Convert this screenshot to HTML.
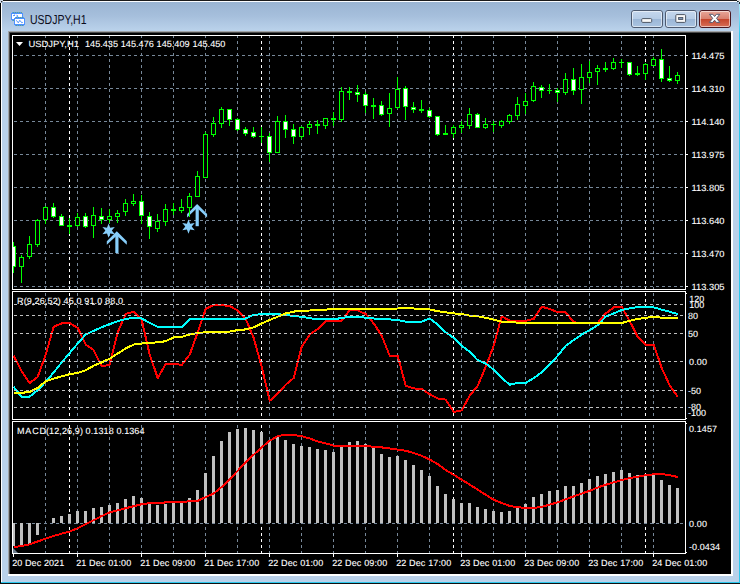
<!DOCTYPE html><html><head><meta charset="utf-8"><title>USDJPY,H1</title><style>html,body{margin:0;padding:0;background:#fff;overflow:hidden}svg{display:block}</style></head><body><svg width="742" height="584" viewBox="0 0 742 584" shape-rendering="crispEdges" font-family="'Liberation Sans', Arial, sans-serif"><defs><linearGradient id="tb" x1="0" y1="0" x2="0" y2="1"><stop offset="0" stop-color="#98b3d1"/><stop offset="0.5" stop-color="#a6bfdc"/><stop offset="1" stop-color="#bcd4ec"/></linearGradient><linearGradient id="bt" x1="0" y1="0" x2="0" y2="1"><stop offset="0" stop-color="#c6d8ee"/><stop offset="0.48" stop-color="#b6cce6"/><stop offset="0.5" stop-color="#9bb6d6"/><stop offset="1" stop-color="#abc5e2"/></linearGradient><linearGradient id="cl" x1="0" y1="0" x2="0" y2="1"><stop offset="0" stop-color="#e9a99c"/><stop offset="0.48" stop-color="#d9816f"/><stop offset="0.5" stop-color="#c4432a"/><stop offset="1" stop-color="#d8725a"/></linearGradient><linearGradient id="cy" x1="0" y1="0" x2="0" y2="1"><stop offset="0" stop-color="#b4eaf8"/><stop offset="1" stop-color="#2cc8ee"/></linearGradient></defs>
<rect x="0" y="0" width="742" height="584" fill="#ffffff"/>
<rect x="0" y="0" width="740" height="584" fill="#b9d1ea"/>
<rect x="0" y="0" width="740" height="32" fill="url(#tb)"/>
<rect x="0" y="0" width="740" height="1" fill="#1a1a1a"/>
<rect x="0" y="0" width="1" height="584" fill="#000000"/>
<rect x="1" y="1" width="738" height="1" fill="#fbfdff"/>
<rect x="1" y="1" width="1" height="581" fill="#ffffff"/>
<rect x="739" y="1" width="1" height="582" fill="#2cc8ee"/>
<rect x="1" y="582" width="739" height="1" fill="#2cc8ee"/>
<rect x="0" y="583" width="740" height="1" fill="#101010"/>
<rect x="0" y="0" width="3" height="1" fill="#cdd9e8"/>
<rect x="0" y="1" width="1" height="2" fill="#cdd9e8"/>
<rect x="1" y="1" width="1" height="1" fill="#2a2a2a"/>
<rect x="2" y="1" width="1" height="1" fill="#8f9aa8"/>
<rect x="1" y="2" width="1" height="1" fill="#8f9aa8"/>
<rect x="737" y="0" width="3" height="1" fill="#dcdcdc"/>
<rect x="737" y="1" width="1" height="1" fill="#1a3038"/>
<rect x="738" y="1" width="1" height="1" fill="#4a5a62"/>
<rect x="739" y="1" width="1" height="1" fill="#e6e6e6"/>
<rect x="739" y="2" width="1" height="2" fill="#1e2e36"/>
<rect x="738" y="2" width="1" height="1" fill="#cfe6f2"/>
<rect x="739" y="4" width="1" height="30" fill="url(#cy)"/>
<rect x="8" y="31" width="725" height="545" fill="#ffffff"/>
<rect x="8" y="31" width="723" height="543" fill="#a0a3a6"/>
<rect x="9" y="32" width="722" height="542" fill="#4a4a4a"/>
<rect x="10" y="33" width="721" height="541" fill="#000000"/>
<path d="M12.5 35.5H685.5V289.5H12.5Z" stroke="#ffffff" stroke-width="1" fill="none"/>
<path d="M12.5 291.5H685.5V419.5H12.5Z" stroke="#ffffff" stroke-width="1" fill="none"/>
<path d="M12.5 421.5H685.5V553.5H12.5Z" stroke="#ffffff" stroke-width="1" fill="none"/>
<clipPath id="cv"><rect x="13" y="36" width="672" height="253"/><rect x="13" y="292" width="672" height="127"/><rect x="13" y="422" width="672" height="131"/></clipPath><g clip-path="url(#cv)">
<path d="M45.5 35V553" stroke="#778899" stroke-width="1" stroke-dasharray="3 3" fill="none"/>
<path d="M77.5 35V553" stroke="#778899" stroke-width="1" stroke-dasharray="3 3" fill="none"/>
<path d="M109.5 35V553" stroke="#778899" stroke-width="1" stroke-dasharray="3 3" fill="none"/>
<path d="M141.5 35V553" stroke="#778899" stroke-width="1" stroke-dasharray="3 3" fill="none"/>
<path d="M173.5 35V553" stroke="#778899" stroke-width="1" stroke-dasharray="3 3" fill="none"/>
<path d="M205.5 35V553" stroke="#778899" stroke-width="1" stroke-dasharray="3 3" fill="none"/>
<path d="M237.5 35V553" stroke="#778899" stroke-width="1" stroke-dasharray="3 3" fill="none"/>
<path d="M269.5 35V553" stroke="#778899" stroke-width="1" stroke-dasharray="3 3" fill="none"/>
<path d="M301.5 35V553" stroke="#778899" stroke-width="1" stroke-dasharray="3 3" fill="none"/>
<path d="M333.5 35V553" stroke="#778899" stroke-width="1" stroke-dasharray="3 3" fill="none"/>
<path d="M365.5 35V553" stroke="#778899" stroke-width="1" stroke-dasharray="3 3" fill="none"/>
<path d="M397.5 35V553" stroke="#778899" stroke-width="1" stroke-dasharray="3 3" fill="none"/>
<path d="M429.5 35V553" stroke="#778899" stroke-width="1" stroke-dasharray="3 3" fill="none"/>
<path d="M461.5 35V553" stroke="#778899" stroke-width="1" stroke-dasharray="3 3" fill="none"/>
<path d="M493.5 35V553" stroke="#778899" stroke-width="1" stroke-dasharray="3 3" fill="none"/>
<path d="M525.5 35V553" stroke="#778899" stroke-width="1" stroke-dasharray="3 3" fill="none"/>
<path d="M557.5 35V553" stroke="#778899" stroke-width="1" stroke-dasharray="3 3" fill="none"/>
<path d="M589.5 35V553" stroke="#778899" stroke-width="1" stroke-dasharray="3 3" fill="none"/>
<path d="M621.5 35V553" stroke="#778899" stroke-width="1" stroke-dasharray="3 3" fill="none"/>
<path d="M653.5 35V553" stroke="#778899" stroke-width="1" stroke-dasharray="3 3" fill="none"/>
<path d="M69.5 35V553" stroke="#ffffff" stroke-width="1" stroke-dasharray="3 3" fill="none"/>
<path d="M261.5 35V553" stroke="#ffffff" stroke-width="1" stroke-dasharray="3 3" fill="none"/>
<path d="M453.5 35V553" stroke="#ffffff" stroke-width="1" stroke-dasharray="3 3" fill="none"/>
<path d="M645.5 35V553" stroke="#ffffff" stroke-width="1" stroke-dasharray="3 3" fill="none"/>
</g>
<path d="M14 55.5H685" stroke="#778899" stroke-width="1" stroke-dasharray="3 3" fill="none"/>
<rect x="686" y="55" width="2" height="1" fill="#ffffff"/>
<path d="M14 88.5H685" stroke="#778899" stroke-width="1" stroke-dasharray="3 3" fill="none"/>
<rect x="686" y="88" width="2" height="1" fill="#ffffff"/>
<path d="M14 121.5H685" stroke="#778899" stroke-width="1" stroke-dasharray="3 3" fill="none"/>
<rect x="686" y="121" width="2" height="1" fill="#ffffff"/>
<path d="M14 154.5H685" stroke="#778899" stroke-width="1" stroke-dasharray="3 3" fill="none"/>
<rect x="686" y="154" width="2" height="1" fill="#ffffff"/>
<path d="M14 187.5H685" stroke="#778899" stroke-width="1" stroke-dasharray="3 3" fill="none"/>
<rect x="686" y="187" width="2" height="1" fill="#ffffff"/>
<path d="M14 220.5H685" stroke="#778899" stroke-width="1" stroke-dasharray="3 3" fill="none"/>
<rect x="686" y="220" width="2" height="1" fill="#ffffff"/>
<path d="M14 253.5H685" stroke="#778899" stroke-width="1" stroke-dasharray="3 3" fill="none"/>
<rect x="686" y="253" width="2" height="1" fill="#ffffff"/>
<path d="M14 286.5H685" stroke="#778899" stroke-width="1" stroke-dasharray="3 3" fill="none"/>
<rect x="686" y="286" width="2" height="1" fill="#ffffff"/>
<rect x="686" y="293" width="1" height="1" fill="#ffffff"/>
<rect x="686" y="418" width="1" height="1" fill="#ffffff"/>
<rect x="686" y="423" width="1" height="1" fill="#ffffff"/>
<rect x="686" y="552" width="1" height="1" fill="#ffffff"/>
<path d="M14 523.5H685" stroke="#778899" stroke-width="1" stroke-dasharray="3 3" fill="none"/>
<polygon points="108.6,223.4 110.2,227.8 114.8,227.0 111.8,230.6 114.8,234.2 110.2,233.4 108.6,237.8 107.0,233.4 102.4,234.2 105.4,230.6 102.4,227.0 107.0,227.8" fill="#87cefa" shape-rendering="auto"/>
<g shape-rendering="auto" fill="#87cefa"><rect x="115.3" y="233.3" width="3.2" height="19.69999999999999"/><path d="M116.8 231.3L126.8 241.3V244.8L116.8 235.5L106.8 244.8V241.3Z"/></g>
<polygon points="188.5,219.4 190.1,223.8 194.7,223.0 191.7,226.6 194.7,230.2 190.1,229.4 188.5,233.8 186.9,229.4 182.3,230.2 185.3,226.6 182.3,223.0 186.9,223.8" fill="#87cefa" shape-rendering="auto"/>
<g shape-rendering="auto" fill="#87cefa"><rect x="195.6" y="205.9" width="3.2" height="20.299999999999983"/><path d="M197.1 203.9L207.1 213.9V217.4L197.1 208.1L187.1 217.4V213.9Z"/></g>
<clipPath id="c1"><rect x="13" y="36" width="672" height="253"/></clipPath><g clip-path="url(#c1)">
<rect x="13" y="242" width="1" height="31" fill="#00ff00"/>
<rect x="11" y="246" width="5" height="21" fill="#00ff00"/>
<rect x="12" y="247" width="3" height="19" fill="#ffffff"/>
<rect x="21" y="255" width="1" height="28" fill="#00ff00"/>
<rect x="19" y="257" width="5" height="10" fill="#00ff00"/>
<rect x="20" y="258" width="3" height="8" fill="#000000"/>
<rect x="29" y="236" width="1" height="23" fill="#00ff00"/>
<rect x="27" y="244" width="5" height="13" fill="#00ff00"/>
<rect x="28" y="245" width="3" height="11" fill="#000000"/>
<rect x="37" y="219" width="1" height="28" fill="#00ff00"/>
<rect x="35" y="220" width="5" height="25" fill="#00ff00"/>
<rect x="36" y="221" width="3" height="23" fill="#000000"/>
<rect x="45" y="206" width="1" height="18" fill="#00ff00"/>
<rect x="43" y="207" width="5" height="13" fill="#00ff00"/>
<rect x="44" y="208" width="3" height="11" fill="#000000"/>
<rect x="53" y="203" width="1" height="15" fill="#00ff00"/>
<rect x="51" y="207" width="5" height="10" fill="#00ff00"/>
<rect x="52" y="208" width="3" height="8" fill="#ffffff"/>
<rect x="61" y="214" width="1" height="12" fill="#00ff00"/>
<rect x="59" y="216" width="5" height="10" fill="#00ff00"/>
<rect x="60" y="217" width="3" height="8" fill="#ffffff"/>
<rect x="69" y="218" width="1" height="16" fill="#00ff00"/>
<rect x="67" y="225" width="5" height="2" fill="#00ff00"/>
<rect x="77" y="213" width="1" height="14" fill="#00ff00"/>
<rect x="75" y="217" width="5" height="9" fill="#00ff00"/>
<rect x="76" y="218" width="3" height="7" fill="#000000"/>
<rect x="85" y="213" width="1" height="15" fill="#00ff00"/>
<rect x="83" y="216" width="5" height="11" fill="#00ff00"/>
<rect x="84" y="217" width="3" height="9" fill="#ffffff"/>
<rect x="93" y="207" width="1" height="31" fill="#00ff00"/>
<rect x="91" y="215" width="5" height="11" fill="#00ff00"/>
<rect x="92" y="216" width="3" height="9" fill="#000000"/>
<rect x="101" y="208" width="1" height="16" fill="#00ff00"/>
<rect x="99" y="216" width="5" height="4" fill="#00ff00"/>
<rect x="100" y="217" width="3" height="2" fill="#ffffff"/>
<rect x="109" y="209" width="1" height="14" fill="#00ff00"/>
<rect x="107" y="216" width="5" height="4" fill="#00ff00"/>
<rect x="108" y="217" width="3" height="2" fill="#000000"/>
<rect x="117" y="210" width="1" height="13" fill="#00ff00"/>
<rect x="115" y="213" width="5" height="4" fill="#00ff00"/>
<rect x="116" y="214" width="3" height="2" fill="#000000"/>
<rect x="125" y="199" width="1" height="17" fill="#00ff00"/>
<rect x="123" y="203" width="5" height="9" fill="#00ff00"/>
<rect x="124" y="204" width="3" height="7" fill="#000000"/>
<rect x="133" y="194" width="1" height="12" fill="#00ff00"/>
<rect x="131" y="201" width="5" height="3" fill="#00ff00"/>
<rect x="132" y="202" width="3" height="1" fill="#000000"/>
<rect x="141" y="195" width="1" height="29" fill="#00ff00"/>
<rect x="139" y="201" width="5" height="15" fill="#00ff00"/>
<rect x="140" y="202" width="3" height="13" fill="#ffffff"/>
<rect x="149" y="212" width="1" height="27" fill="#00ff00"/>
<rect x="147" y="216" width="5" height="11" fill="#00ff00"/>
<rect x="148" y="217" width="3" height="9" fill="#ffffff"/>
<rect x="157" y="214" width="1" height="18" fill="#00ff00"/>
<rect x="155" y="221" width="5" height="8" fill="#00ff00"/>
<rect x="156" y="222" width="3" height="6" fill="#000000"/>
<rect x="165" y="204" width="1" height="22" fill="#00ff00"/>
<rect x="163" y="209" width="5" height="13" fill="#00ff00"/>
<rect x="164" y="210" width="3" height="11" fill="#000000"/>
<rect x="173" y="203" width="1" height="12" fill="#00ff00"/>
<rect x="171" y="209" width="5" height="2" fill="#00ff00"/>
<rect x="181" y="199" width="1" height="14" fill="#00ff00"/>
<rect x="179" y="207" width="5" height="4" fill="#00ff00"/>
<rect x="180" y="208" width="3" height="2" fill="#000000"/>
<rect x="189" y="193" width="1" height="24" fill="#00ff00"/>
<rect x="187" y="196" width="5" height="12" fill="#00ff00"/>
<rect x="188" y="197" width="3" height="10" fill="#000000"/>
<rect x="197" y="171" width="1" height="26" fill="#00ff00"/>
<rect x="195" y="176" width="5" height="21" fill="#00ff00"/>
<rect x="196" y="177" width="3" height="19" fill="#000000"/>
<rect x="205" y="132" width="1" height="46" fill="#00ff00"/>
<rect x="203" y="134" width="5" height="44" fill="#00ff00"/>
<rect x="204" y="135" width="3" height="42" fill="#000000"/>
<rect x="213" y="117" width="1" height="20" fill="#00ff00"/>
<rect x="211" y="123" width="5" height="12" fill="#00ff00"/>
<rect x="212" y="124" width="3" height="10" fill="#000000"/>
<rect x="221" y="107" width="1" height="21" fill="#00ff00"/>
<rect x="219" y="109" width="5" height="15" fill="#00ff00"/>
<rect x="220" y="110" width="3" height="13" fill="#000000"/>
<rect x="229" y="109" width="1" height="17" fill="#00ff00"/>
<rect x="227" y="109" width="5" height="11" fill="#00ff00"/>
<rect x="228" y="110" width="3" height="9" fill="#ffffff"/>
<rect x="237" y="118" width="1" height="13" fill="#00ff00"/>
<rect x="235" y="119" width="5" height="11" fill="#00ff00"/>
<rect x="236" y="120" width="3" height="9" fill="#ffffff"/>
<rect x="245" y="127" width="1" height="9" fill="#00ff00"/>
<rect x="243" y="129" width="5" height="5" fill="#00ff00"/>
<rect x="244" y="130" width="3" height="3" fill="#ffffff"/>
<rect x="253" y="127" width="1" height="11" fill="#00ff00"/>
<rect x="251" y="132" width="5" height="5" fill="#00ff00"/>
<rect x="252" y="133" width="3" height="3" fill="#ffffff"/>
<rect x="261" y="127" width="1" height="16" fill="#00ff00"/>
<rect x="259" y="136" width="5" height="1" fill="#00ff00"/>
<rect x="269" y="133" width="1" height="29" fill="#00ff00"/>
<rect x="267" y="136" width="5" height="17" fill="#00ff00"/>
<rect x="268" y="137" width="3" height="15" fill="#ffffff"/>
<rect x="277" y="116" width="1" height="37" fill="#00ff00"/>
<rect x="275" y="121" width="5" height="32" fill="#00ff00"/>
<rect x="276" y="122" width="3" height="30" fill="#000000"/>
<rect x="285" y="115" width="1" height="23" fill="#00ff00"/>
<rect x="283" y="121" width="5" height="9" fill="#00ff00"/>
<rect x="284" y="122" width="3" height="7" fill="#ffffff"/>
<rect x="293" y="124" width="1" height="20" fill="#00ff00"/>
<rect x="291" y="129" width="5" height="8" fill="#00ff00"/>
<rect x="292" y="130" width="3" height="6" fill="#ffffff"/>
<rect x="301" y="126" width="1" height="13" fill="#00ff00"/>
<rect x="299" y="127" width="5" height="10" fill="#00ff00"/>
<rect x="300" y="128" width="3" height="8" fill="#000000"/>
<rect x="309" y="121" width="1" height="14" fill="#00ff00"/>
<rect x="307" y="124" width="5" height="4" fill="#00ff00"/>
<rect x="308" y="125" width="3" height="2" fill="#000000"/>
<rect x="317" y="120" width="1" height="14" fill="#00ff00"/>
<rect x="315" y="124" width="5" height="2" fill="#00ff00"/>
<rect x="325" y="118" width="1" height="11" fill="#00ff00"/>
<rect x="323" y="118" width="5" height="8" fill="#00ff00"/>
<rect x="324" y="119" width="3" height="6" fill="#000000"/>
<rect x="333" y="112" width="1" height="14" fill="#00ff00"/>
<rect x="331" y="118" width="5" height="2" fill="#00ff00"/>
<rect x="341" y="87" width="1" height="35" fill="#00ff00"/>
<rect x="339" y="91" width="5" height="29" fill="#00ff00"/>
<rect x="340" y="92" width="3" height="27" fill="#000000"/>
<rect x="349" y="87" width="1" height="13" fill="#00ff00"/>
<rect x="347" y="91" width="5" height="2" fill="#00ff00"/>
<rect x="357" y="85" width="1" height="17" fill="#00ff00"/>
<rect x="355" y="92" width="5" height="3" fill="#00ff00"/>
<rect x="356" y="93" width="3" height="1" fill="#ffffff"/>
<rect x="365" y="92" width="1" height="21" fill="#00ff00"/>
<rect x="363" y="94" width="5" height="12" fill="#00ff00"/>
<rect x="364" y="95" width="3" height="10" fill="#ffffff"/>
<rect x="373" y="98" width="1" height="21" fill="#00ff00"/>
<rect x="371" y="105" width="5" height="2" fill="#00ff00"/>
<rect x="381" y="101" width="1" height="15" fill="#00ff00"/>
<rect x="379" y="105" width="5" height="10" fill="#00ff00"/>
<rect x="380" y="106" width="3" height="8" fill="#ffffff"/>
<rect x="389" y="93" width="1" height="34" fill="#00ff00"/>
<rect x="387" y="108" width="5" height="6" fill="#00ff00"/>
<rect x="388" y="109" width="3" height="4" fill="#000000"/>
<rect x="397" y="77" width="1" height="32" fill="#00ff00"/>
<rect x="395" y="89" width="5" height="19" fill="#00ff00"/>
<rect x="396" y="90" width="3" height="17" fill="#000000"/>
<rect x="405" y="86" width="1" height="34" fill="#00ff00"/>
<rect x="403" y="88" width="5" height="19" fill="#00ff00"/>
<rect x="404" y="89" width="3" height="17" fill="#ffffff"/>
<rect x="413" y="102" width="1" height="11" fill="#00ff00"/>
<rect x="411" y="107" width="5" height="3" fill="#00ff00"/>
<rect x="412" y="108" width="3" height="1" fill="#ffffff"/>
<rect x="421" y="100" width="1" height="13" fill="#00ff00"/>
<rect x="419" y="109" width="5" height="2" fill="#00ff00"/>
<rect x="429" y="108" width="1" height="10" fill="#00ff00"/>
<rect x="427" y="110" width="5" height="7" fill="#00ff00"/>
<rect x="428" y="111" width="3" height="5" fill="#ffffff"/>
<rect x="437" y="116" width="1" height="20" fill="#00ff00"/>
<rect x="435" y="116" width="5" height="19" fill="#00ff00"/>
<rect x="436" y="117" width="3" height="17" fill="#ffffff"/>
<rect x="445" y="125" width="1" height="9" fill="#00ff00"/>
<rect x="443" y="133" width="5" height="2" fill="#00ff00"/>
<rect x="453" y="125" width="1" height="13" fill="#00ff00"/>
<rect x="451" y="127" width="5" height="7" fill="#00ff00"/>
<rect x="452" y="128" width="3" height="5" fill="#000000"/>
<rect x="461" y="121" width="1" height="12" fill="#00ff00"/>
<rect x="459" y="125" width="5" height="3" fill="#00ff00"/>
<rect x="460" y="126" width="3" height="1" fill="#000000"/>
<rect x="469" y="108" width="1" height="21" fill="#00ff00"/>
<rect x="467" y="114" width="5" height="12" fill="#00ff00"/>
<rect x="468" y="115" width="3" height="10" fill="#000000"/>
<rect x="477" y="113" width="1" height="15" fill="#00ff00"/>
<rect x="475" y="114" width="5" height="14" fill="#00ff00"/>
<rect x="476" y="115" width="3" height="12" fill="#ffffff"/>
<rect x="485" y="118" width="1" height="11" fill="#00ff00"/>
<rect x="483" y="124" width="5" height="4" fill="#00ff00"/>
<rect x="484" y="125" width="3" height="2" fill="#000000"/>
<rect x="493" y="121" width="1" height="11" fill="#00ff00"/>
<rect x="491" y="124" width="5" height="1" fill="#00ff00"/>
<rect x="501" y="120" width="1" height="8" fill="#00ff00"/>
<rect x="499" y="121" width="5" height="5" fill="#00ff00"/>
<rect x="500" y="122" width="3" height="3" fill="#000000"/>
<rect x="509" y="114" width="1" height="10" fill="#00ff00"/>
<rect x="507" y="115" width="5" height="7" fill="#00ff00"/>
<rect x="508" y="116" width="3" height="5" fill="#000000"/>
<rect x="517" y="97" width="1" height="23" fill="#00ff00"/>
<rect x="515" y="104" width="5" height="12" fill="#00ff00"/>
<rect x="516" y="105" width="3" height="10" fill="#000000"/>
<rect x="525" y="93" width="1" height="21" fill="#00ff00"/>
<rect x="523" y="101" width="5" height="5" fill="#00ff00"/>
<rect x="524" y="102" width="3" height="3" fill="#000000"/>
<rect x="533" y="82" width="1" height="20" fill="#00ff00"/>
<rect x="531" y="86" width="5" height="15" fill="#00ff00"/>
<rect x="532" y="87" width="3" height="13" fill="#000000"/>
<rect x="541" y="85" width="1" height="13" fill="#00ff00"/>
<rect x="539" y="87" width="5" height="4" fill="#00ff00"/>
<rect x="540" y="88" width="3" height="2" fill="#ffffff"/>
<rect x="549" y="84" width="1" height="10" fill="#00ff00"/>
<rect x="547" y="90" width="5" height="1" fill="#00ff00"/>
<rect x="557" y="88" width="1" height="14" fill="#00ff00"/>
<rect x="555" y="90" width="5" height="3" fill="#00ff00"/>
<rect x="556" y="91" width="3" height="1" fill="#ffffff"/>
<rect x="565" y="73" width="1" height="22" fill="#00ff00"/>
<rect x="563" y="79" width="5" height="14" fill="#00ff00"/>
<rect x="564" y="80" width="3" height="12" fill="#000000"/>
<rect x="573" y="68" width="1" height="27" fill="#00ff00"/>
<rect x="571" y="79" width="5" height="12" fill="#00ff00"/>
<rect x="572" y="80" width="3" height="10" fill="#ffffff"/>
<rect x="581" y="64" width="1" height="40" fill="#00ff00"/>
<rect x="579" y="77" width="5" height="13" fill="#00ff00"/>
<rect x="580" y="78" width="3" height="11" fill="#000000"/>
<rect x="589" y="61" width="1" height="22" fill="#00ff00"/>
<rect x="587" y="72" width="5" height="6" fill="#00ff00"/>
<rect x="588" y="73" width="3" height="4" fill="#000000"/>
<rect x="597" y="65" width="1" height="20" fill="#00ff00"/>
<rect x="595" y="68" width="5" height="4" fill="#00ff00"/>
<rect x="596" y="69" width="3" height="2" fill="#000000"/>
<rect x="605" y="62" width="1" height="10" fill="#00ff00"/>
<rect x="603" y="68" width="5" height="2" fill="#00ff00"/>
<rect x="613" y="58" width="1" height="12" fill="#00ff00"/>
<rect x="611" y="62" width="5" height="7" fill="#00ff00"/>
<rect x="612" y="63" width="3" height="5" fill="#000000"/>
<rect x="621" y="59" width="1" height="9" fill="#00ff00"/>
<rect x="619" y="62" width="5" height="1" fill="#00ff00"/>
<rect x="629" y="62" width="1" height="14" fill="#00ff00"/>
<rect x="627" y="62" width="5" height="13" fill="#00ff00"/>
<rect x="628" y="63" width="3" height="11" fill="#ffffff"/>
<rect x="637" y="66" width="1" height="10" fill="#00ff00"/>
<rect x="635" y="73" width="5" height="2" fill="#00ff00"/>
<rect x="645" y="63" width="1" height="17" fill="#00ff00"/>
<rect x="643" y="64" width="5" height="10" fill="#00ff00"/>
<rect x="644" y="65" width="3" height="8" fill="#000000"/>
<rect x="653" y="57" width="1" height="9" fill="#00ff00"/>
<rect x="651" y="59" width="5" height="7" fill="#00ff00"/>
<rect x="652" y="60" width="3" height="5" fill="#000000"/>
<rect x="661" y="49" width="1" height="33" fill="#00ff00"/>
<rect x="659" y="59" width="5" height="20" fill="#00ff00"/>
<rect x="660" y="60" width="3" height="18" fill="#ffffff"/>
<rect x="669" y="66" width="1" height="16" fill="#00ff00"/>
<rect x="667" y="78" width="5" height="3" fill="#00ff00"/>
<rect x="668" y="79" width="3" height="1" fill="#ffffff"/>
<rect x="677" y="72" width="1" height="12" fill="#00ff00"/>
<rect x="675" y="75" width="5" height="6" fill="#00ff00"/>
<rect x="676" y="76" width="3" height="4" fill="#000000"/>
</g>
<clipPath id="c2"><rect x="13" y="292" width="672" height="127"/></clipPath><g clip-path="url(#c2)">
<polyline points="13.7,355.8 21.7,371.3 29.7,383.2 37.7,376.9 45.7,354.6 53.7,326.7 61.7,323.4 69.7,323.0 77.7,327.9 85.7,344.6 93.7,350.1 101.7,366.4 109.7,364.6 117.7,332.3 125.7,314.0 133.7,311.6 141.7,320.0 149.7,354.6 157.7,378.0 165.7,364.2 173.7,363.5 181.7,365.0 189.7,354.6 197.7,332.3 205.7,308.9 213.7,305.1 221.7,305.1 229.7,306.0 237.7,310.5 245.7,319.0 253.7,337.9 261.7,366.8 269.7,400.9 277.7,393.6 285.7,384.7 293.7,378.0 301.7,346.8 309.7,334.5 317.7,329.0 325.7,321.2 333.7,320.7 341.7,320.7 349.7,310.0 357.7,310.5 365.7,314.0 373.7,323.4 381.7,335.7 389.7,355.7 397.7,355.7 405.7,385.8 413.7,388.4 421.7,389.1 429.7,394.2 437.7,398.5 445.7,399.6 453.7,412.0 461.7,410.3 469.7,395.8 477.7,385.8 485.7,366.8 493.7,345.7 501.7,316.3 509.7,320.7 517.7,321.2 525.7,320.7 533.7,319.0 541.7,306.7 549.7,308.9 557.7,312.3 565.7,312.3 573.7,322.3 581.7,323.0 589.7,323.0 597.7,323.0 605.7,313.4 613.7,307.4 621.7,306.7 629.7,321.2 637.7,336.8 645.7,344.6 653.7,344.6 661.7,368.0 669.7,385.3 677.7,396.9" fill="none" stroke="#ff0000" stroke-width="2" stroke-linejoin="round"/>
<polyline points="13.7,386.9 21.7,397.0 29.7,396.6 37.7,390.2 45.7,381.8 53.7,372.4 61.7,362.4 69.7,353.0 77.7,343.5 85.7,334.5 93.7,330.8 101.7,327.2 109.7,324.1 117.7,321.2 125.7,319.0 133.7,317.8 141.7,318.5 149.7,323.0 157.7,326.7 165.7,327.2 173.7,327.2 181.7,327.2 189.7,319.0 197.7,318.5 205.7,318.5 213.7,318.5 221.7,318.5 229.7,318.5 237.7,318.5 245.7,318.5 253.7,314.8 261.7,314.2 269.7,314.2 277.7,314.2 285.7,314.9 293.7,316.0 301.7,316.8 309.7,318.2 317.7,319.3 325.7,319.3 333.7,319.3 341.7,318.0 349.7,316.7 357.7,316.7 365.7,317.8 373.7,318.5 381.7,319.0 389.7,319.4 397.7,320.0 405.7,321.6 413.7,321.6 421.7,321.6 429.7,318.5 437.7,324.5 445.7,332.3 453.7,337.9 461.7,345.7 469.7,351.9 477.7,360.2 485.7,363.5 493.7,369.7 501.7,378.0 509.7,384.7 517.7,382.9 525.7,382.9 533.7,378.0 541.7,372.4 549.7,364.6 557.7,355.7 565.7,345.7 573.7,340.1 581.7,334.5 589.7,330.1 597.7,325.2 605.7,316.7 613.7,313.4 621.7,310.0 629.7,308.3 637.7,307.1 645.7,306.7 653.7,307.4 661.7,309.6 669.7,311.8 677.7,314.0" fill="none" stroke="#00ffff" stroke-width="2" stroke-linejoin="round"/>
<polyline points="13.7,392.9 21.7,392.9 29.7,391.8 37.7,388.0 45.7,381.3 53.7,378.6 61.7,376.4 69.7,374.2 77.7,372.9 85.7,370.2 93.7,365.7 101.7,362.4 109.7,358.6 117.7,353.5 125.7,348.4 133.7,344.6 141.7,343.5 149.7,343.0 157.7,342.3 165.7,341.2 173.7,337.4 181.7,336.8 189.7,334.5 197.7,333.0 205.7,332.3 213.7,331.6 221.7,331.6 229.7,331.6 237.7,330.1 245.7,329.4 253.7,327.4 261.7,323.4 269.7,320.0 277.7,316.7 285.7,313.4 293.7,311.6 301.7,310.7 309.7,310.5 317.7,310.0 325.7,309.6 333.7,308.9 341.7,308.9 349.7,308.9 357.7,308.9 365.7,308.9 373.7,308.9 381.7,308.9 389.7,308.9 397.7,308.5 405.7,307.8 413.7,308.5 421.7,308.9 429.7,309.4 437.7,311.2 445.7,312.3 453.7,313.4 461.7,314.0 469.7,315.6 477.7,316.3 485.7,317.8 493.7,319.6 501.7,321.6 509.7,321.8 517.7,322.7 525.7,323.0 533.7,323.0 541.7,323.0 549.7,323.0 557.7,323.0 565.7,323.0 573.7,323.0 581.7,323.0 589.7,323.0 597.7,323.0 605.7,323.0 613.7,323.0 621.7,323.0 629.7,320.7 637.7,319.0 645.7,317.8 653.7,316.7 661.7,317.8 669.7,317.8 677.7,317.8" fill="none" stroke="#ffff00" stroke-width="2" stroke-linejoin="round"/>
</g>
<path d="M14 304.5H685" stroke="#c0c0c0" stroke-width="1" stroke-dasharray="3 3" fill="none"/>
<path d="M14 315.5H685" stroke="#c0c0c0" stroke-width="1" stroke-dasharray="3 3" fill="none"/>
<path d="M14 333.5H685" stroke="#c0c0c0" stroke-width="1" stroke-dasharray="3 3" fill="none"/>
<path d="M14 361.5H685" stroke="#c0c0c0" stroke-width="1" stroke-dasharray="3 3" fill="none"/>
<path d="M14 390.5H685" stroke="#c0c0c0" stroke-width="1" stroke-dasharray="3 3" fill="none"/>
<path d="M14 407.5H685" stroke="#c0c0c0" stroke-width="1" stroke-dasharray="3 3" fill="none"/>
<clipPath id="c3"><rect x="13" y="422" width="672" height="131"/></clipPath><g clip-path="url(#c3)">
<rect x="12" y="523" width="3" height="23" fill="#c0c0c0"/>
<rect x="20" y="523" width="3" height="23" fill="#c0c0c0"/>
<rect x="28" y="523" width="3" height="21" fill="#c0c0c0"/>
<rect x="36" y="523" width="3" height="12" fill="#c0c0c0"/>
<rect x="52" y="518" width="3" height="5" fill="#c0c0c0"/>
<rect x="60" y="516" width="3" height="7" fill="#c0c0c0"/>
<rect x="68" y="514" width="3" height="9" fill="#c0c0c0"/>
<rect x="76" y="511" width="3" height="12" fill="#c0c0c0"/>
<rect x="84" y="511" width="3" height="12" fill="#c0c0c0"/>
<rect x="92" y="508" width="3" height="15" fill="#c0c0c0"/>
<rect x="100" y="507" width="3" height="16" fill="#c0c0c0"/>
<rect x="108" y="505" width="3" height="18" fill="#c0c0c0"/>
<rect x="116" y="503" width="3" height="20" fill="#c0c0c0"/>
<rect x="124" y="499" width="3" height="24" fill="#c0c0c0"/>
<rect x="132" y="496" width="3" height="27" fill="#c0c0c0"/>
<rect x="140" y="498" width="3" height="25" fill="#c0c0c0"/>
<rect x="148" y="502" width="3" height="21" fill="#c0c0c0"/>
<rect x="156" y="505" width="3" height="18" fill="#c0c0c0"/>
<rect x="164" y="504" width="3" height="19" fill="#c0c0c0"/>
<rect x="172" y="502" width="3" height="21" fill="#c0c0c0"/>
<rect x="180" y="501" width="3" height="22" fill="#c0c0c0"/>
<rect x="188" y="498" width="3" height="25" fill="#c0c0c0"/>
<rect x="196" y="490" width="3" height="33" fill="#c0c0c0"/>
<rect x="204" y="473" width="3" height="50" fill="#c0c0c0"/>
<rect x="212" y="456" width="3" height="67" fill="#c0c0c0"/>
<rect x="220" y="441" width="3" height="82" fill="#c0c0c0"/>
<rect x="228" y="432" width="3" height="91" fill="#c0c0c0"/>
<rect x="236" y="429" width="3" height="94" fill="#c0c0c0"/>
<rect x="244" y="428" width="3" height="95" fill="#c0c0c0"/>
<rect x="252" y="430" width="3" height="93" fill="#c0c0c0"/>
<rect x="260" y="432" width="3" height="91" fill="#c0c0c0"/>
<rect x="268" y="440" width="3" height="83" fill="#c0c0c0"/>
<rect x="276" y="437" width="3" height="86" fill="#c0c0c0"/>
<rect x="284" y="440" width="3" height="83" fill="#c0c0c0"/>
<rect x="292" y="444" width="3" height="79" fill="#c0c0c0"/>
<rect x="300" y="446" width="3" height="77" fill="#c0c0c0"/>
<rect x="308" y="447" width="3" height="76" fill="#c0c0c0"/>
<rect x="316" y="449" width="3" height="74" fill="#c0c0c0"/>
<rect x="324" y="450" width="3" height="73" fill="#c0c0c0"/>
<rect x="332" y="452" width="3" height="71" fill="#c0c0c0"/>
<rect x="340" y="446" width="3" height="77" fill="#c0c0c0"/>
<rect x="348" y="442" width="3" height="81" fill="#c0c0c0"/>
<rect x="356" y="441" width="3" height="82" fill="#c0c0c0"/>
<rect x="364" y="444" width="3" height="79" fill="#c0c0c0"/>
<rect x="372" y="447" width="3" height="76" fill="#c0c0c0"/>
<rect x="380" y="454" width="3" height="69" fill="#c0c0c0"/>
<rect x="388" y="457" width="3" height="66" fill="#c0c0c0"/>
<rect x="396" y="456" width="3" height="67" fill="#c0c0c0"/>
<rect x="404" y="460" width="3" height="63" fill="#c0c0c0"/>
<rect x="412" y="465" width="3" height="58" fill="#c0c0c0"/>
<rect x="420" y="470" width="3" height="53" fill="#c0c0c0"/>
<rect x="428" y="476" width="3" height="47" fill="#c0c0c0"/>
<rect x="436" y="486" width="3" height="37" fill="#c0c0c0"/>
<rect x="444" y="494" width="3" height="29" fill="#c0c0c0"/>
<rect x="452" y="499" width="3" height="24" fill="#c0c0c0"/>
<rect x="460" y="503" width="3" height="20" fill="#c0c0c0"/>
<rect x="468" y="503" width="3" height="20" fill="#c0c0c0"/>
<rect x="476" y="507" width="3" height="16" fill="#c0c0c0"/>
<rect x="484" y="509" width="3" height="14" fill="#c0c0c0"/>
<rect x="492" y="511" width="3" height="12" fill="#c0c0c0"/>
<rect x="500" y="512" width="3" height="11" fill="#c0c0c0"/>
<rect x="508" y="511" width="3" height="12" fill="#c0c0c0"/>
<rect x="516" y="508" width="3" height="15" fill="#c0c0c0"/>
<rect x="524" y="504" width="3" height="19" fill="#c0c0c0"/>
<rect x="532" y="497" width="3" height="26" fill="#c0c0c0"/>
<rect x="540" y="494" width="3" height="29" fill="#c0c0c0"/>
<rect x="548" y="491" width="3" height="32" fill="#c0c0c0"/>
<rect x="556" y="490" width="3" height="33" fill="#c0c0c0"/>
<rect x="564" y="486" width="3" height="37" fill="#c0c0c0"/>
<rect x="572" y="486" width="3" height="37" fill="#c0c0c0"/>
<rect x="580" y="483" width="3" height="40" fill="#c0c0c0"/>
<rect x="588" y="479" width="3" height="44" fill="#c0c0c0"/>
<rect x="596" y="476" width="3" height="47" fill="#c0c0c0"/>
<rect x="604" y="474" width="3" height="49" fill="#c0c0c0"/>
<rect x="612" y="472" width="3" height="51" fill="#c0c0c0"/>
<rect x="620" y="470" width="3" height="53" fill="#c0c0c0"/>
<rect x="628" y="473" width="3" height="50" fill="#c0c0c0"/>
<rect x="636" y="475" width="3" height="48" fill="#c0c0c0"/>
<rect x="644" y="476" width="3" height="47" fill="#c0c0c0"/>
<rect x="652" y="475" width="3" height="48" fill="#c0c0c0"/>
<rect x="660" y="480" width="3" height="43" fill="#c0c0c0"/>
<rect x="668" y="485" width="3" height="38" fill="#c0c0c0"/>
<rect x="676" y="488" width="3" height="35" fill="#c0c0c0"/>
<polyline points="13.7,547.0 21.7,546.0 29.7,544.3 37.7,541.4 45.7,538.7 53.7,536.0 61.7,533.6 69.7,531.6 77.7,528.2 85.7,524.2 93.7,520.2 101.7,516.0 109.7,512.4 117.7,510.4 125.7,508.2 133.7,506.2 141.7,504.2 149.7,503.1 157.7,503.1 165.7,502.4 173.7,502.0 181.7,502.0 189.7,501.3 197.7,500.8 205.7,497.1 213.7,493.5 221.7,487.0 229.7,479.2 237.7,470.8 245.7,462.3 253.7,454.7 261.7,447.4 269.7,440.7 277.7,436.2 285.7,434.7 293.7,435.1 301.7,436.2 309.7,438.5 317.7,441.4 325.7,443.4 333.7,445.6 341.7,445.8 349.7,445.8 357.7,445.8 365.7,445.8 373.7,446.9 381.7,447.4 389.7,448.5 397.7,449.6 405.7,450.7 413.7,453.0 421.7,455.8 429.7,459.6 437.7,464.1 445.7,470.1 453.7,474.8 461.7,479.7 469.7,484.6 477.7,489.7 485.7,494.8 493.7,499.7 501.7,503.0 509.7,506.0 517.7,507.1 525.7,508.0 533.7,508.0 541.7,506.9 549.7,504.6 557.7,502.4 565.7,499.3 573.7,496.4 581.7,493.5 589.7,490.8 597.7,487.5 605.7,484.8 613.7,482.4 621.7,480.1 629.7,478.1 637.7,476.8 645.7,475.2 653.7,474.3 661.7,474.1 669.7,475.2 677.7,477.0" fill="none" stroke="#ff0000" stroke-width="2" stroke-linejoin="round"/>
</g>
<path d="M13 548V553H18Z" fill="#708090" shape-rendering="auto"/>
<rect x="13" y="554" width="1" height="3" fill="#ffffff"/>
<rect x="77" y="554" width="1" height="3" fill="#ffffff"/>
<rect x="141" y="554" width="1" height="3" fill="#ffffff"/>
<rect x="205" y="554" width="1" height="3" fill="#ffffff"/>
<rect x="269" y="554" width="1" height="3" fill="#ffffff"/>
<rect x="333" y="554" width="1" height="3" fill="#ffffff"/>
<rect x="397" y="554" width="1" height="3" fill="#ffffff"/>
<rect x="461" y="554" width="1" height="3" fill="#ffffff"/>
<rect x="525" y="554" width="1" height="3" fill="#ffffff"/>
<rect x="589" y="554" width="1" height="3" fill="#ffffff"/>
<rect x="653" y="554" width="1" height="3" fill="#ffffff"/>
<path d="M16 42H23L19.5 46Z" fill="#ffffff" shape-rendering="auto"/>
<g shape-rendering="auto"><rect x="631.5" y="10.5" width="31" height="17" rx="2.5" fill="url(#bt)" stroke="#4d5a70"/><rect x="632.5" y="11.5" width="29" height="15" rx="1.5" fill="none" stroke="#ffffff" stroke-opacity="0.55"/></g>
<g shape-rendering="auto"><rect x="665.5" y="10.5" width="31" height="17" rx="2.5" fill="url(#bt)" stroke="#4d5a70"/><rect x="666.5" y="11.5" width="29" height="15" rx="1.5" fill="none" stroke="#ffffff" stroke-opacity="0.55"/></g>
<g shape-rendering="auto"><rect x="699.5" y="10.5" width="31" height="17" rx="2.5" fill="url(#cl)" stroke="#4a1820"/><rect x="700.5" y="11.5" width="29" height="15" rx="1.5" fill="none" stroke="#ffffff" stroke-opacity="0.55"/></g>
<g shape-rendering="auto"><rect x="641.7" y="18.6" width="10" height="3.8" rx="1" fill="#f8f8f8" stroke="#4c5564"/><rect x="675.8" y="14.6" width="9.8" height="7.8" rx="1" fill="#f8f8f8" stroke="#4c5564"/><rect x="678.6" y="17.5" width="4.2" height="2" fill="#7f97b8" stroke="#4c5564" stroke-width="0.9"/><path d="M709.4 14.3H712.8L714.6 16.5L716.4 14.3H719.8L716.5 18.35L719.8 22.4H716.4L714.6 20.2L712.8 22.4H709.4L712.7 18.35Z" fill="#ffffff" stroke="#56596e" stroke-width="1" stroke-linejoin="round"/></g>
<rect x="12" y="12" width="10" height="1" fill="#59a58c"/>
<rect x="12" y="12" width="1" height="1" fill="#4f92ff"/>
<rect x="14" y="12" width="1" height="1" fill="#4f92ff"/>
<rect x="16" y="12" width="1" height="1" fill="#4f92ff"/>
<rect x="18" y="12" width="1" height="1" fill="#4f92ff"/>
<rect x="20" y="12" width="1" height="1" fill="#4f92ff"/>
<rect x="11" y="13" width="12" height="7" fill="#4f92ff"/>
<rect x="12" y="14" width="10" height="5" fill="#ffffff"/>
<rect x="12" y="20" width="10" height="1" fill="#4f92ff"/>
<rect x="13" y="20" width="1" height="1" fill="#59a58c"/>
<rect x="15" y="20" width="1" height="1" fill="#59a58c"/>
<rect x="17" y="20" width="1" height="1" fill="#59a58c"/>
<rect x="19" y="20" width="1" height="1" fill="#59a58c"/>
<rect x="21" y="20" width="1" height="1" fill="#59a58c"/>
<rect x="15" y="17" width="9" height="1" fill="#59a58c"/>
<rect x="15" y="17" width="1" height="1" fill="#4f92ff"/>
<rect x="17" y="17" width="1" height="1" fill="#4f92ff"/>
<rect x="19" y="17" width="1" height="1" fill="#4f92ff"/>
<rect x="21" y="17" width="1" height="1" fill="#4f92ff"/>
<rect x="23" y="17" width="1" height="1" fill="#4f92ff"/>
<rect x="14" y="18" width="11" height="7" fill="#4f92ff"/>
<rect x="15" y="19" width="9" height="5" fill="#ffffff"/>
<rect x="15" y="25" width="9" height="1" fill="#4f92ff"/>
<rect x="16" y="25" width="1" height="1" fill="#59a58c"/>
<rect x="18" y="25" width="1" height="1" fill="#59a58c"/>
<rect x="20" y="25" width="1" height="1" fill="#59a58c"/>
<rect x="22" y="25" width="1" height="1" fill="#59a58c"/>
<g shape-rendering="auto" fill="none" stroke="#4f92ff" stroke-width="1"><path d="M13 16l1.5-1.2 0 1.2M16.5 14.8l1.5 1.5-1.5 0"/><path d="M16.3 20.3l2 2.5 1.5-2.5 2 2.5 1 -0.5"/></g>
<g shape-rendering="auto" text-rendering="geometricPrecision" stroke="#ffffff" stroke-width="0.1"><text x="12.2" y="566" font-size="9" fill="#ffffff" textLength="52" lengthAdjust="spacing">20 Dec 2021</text>
<text x="76.2" y="566" font-size="9" fill="#ffffff" textLength="55" lengthAdjust="spacing">21 Dec 01:00</text>
<text x="140.2" y="566" font-size="9" fill="#ffffff" textLength="55" lengthAdjust="spacing">21 Dec 09:00</text>
<text x="204.2" y="566" font-size="9" fill="#ffffff" textLength="55" lengthAdjust="spacing">21 Dec 17:00</text>
<text x="268.2" y="566" font-size="9" fill="#ffffff" textLength="55" lengthAdjust="spacing">22 Dec 01:00</text>
<text x="332.2" y="566" font-size="9" fill="#ffffff" textLength="55" lengthAdjust="spacing">22 Dec 09:00</text>
<text x="396.2" y="566" font-size="9" fill="#ffffff" textLength="55" lengthAdjust="spacing">22 Dec 17:00</text>
<text x="460.2" y="566" font-size="9" fill="#ffffff" textLength="55" lengthAdjust="spacing">23 Dec 01:00</text>
<text x="524.2" y="566" font-size="9" fill="#ffffff" textLength="55" lengthAdjust="spacing">23 Dec 09:00</text>
<text x="588.2" y="566" font-size="9" fill="#ffffff" textLength="55" lengthAdjust="spacing">23 Dec 17:00</text>
<text x="652.2" y="566" font-size="9" fill="#ffffff" textLength="55" lengthAdjust="spacing">24 Dec 01:00</text>
<text x="691.5" y="59" font-size="9" fill="#ffffff" textLength="33" lengthAdjust="spacingAndGlyphs">114.475</text>
<text x="691.5" y="92" font-size="9" fill="#ffffff" textLength="33" lengthAdjust="spacingAndGlyphs">114.310</text>
<text x="691.5" y="125" font-size="9" fill="#ffffff" textLength="33" lengthAdjust="spacingAndGlyphs">114.140</text>
<text x="691.5" y="158" font-size="9" fill="#ffffff" textLength="33" lengthAdjust="spacingAndGlyphs">113.975</text>
<text x="691.5" y="191" font-size="9" fill="#ffffff" textLength="33" lengthAdjust="spacingAndGlyphs">113.805</text>
<text x="691.5" y="224" font-size="9" fill="#ffffff" textLength="33" lengthAdjust="spacingAndGlyphs">113.640</text>
<text x="691.5" y="257" font-size="9" fill="#ffffff" textLength="33" lengthAdjust="spacingAndGlyphs">113.470</text>
<text x="691.5" y="290" font-size="9" fill="#ffffff" textLength="33" lengthAdjust="spacingAndGlyphs">113.305</text>
<text x="689.2" y="302" font-size="9" fill="#ffffff" textLength="15" lengthAdjust="spacing">120</text>
<text x="689.2" y="308" font-size="9" fill="#ffffff" textLength="15" lengthAdjust="spacing">100</text>
<text x="688" y="319" font-size="9" fill="#ffffff" textLength="10" lengthAdjust="spacing">80</text>
<text x="688" y="337" font-size="9" fill="#ffffff" textLength="10" lengthAdjust="spacing">50</text>
<text x="689" y="365" font-size="9" fill="#ffffff" textLength="18" lengthAdjust="spacing">0.00</text>
<text x="688" y="394" font-size="9" fill="#ffffff" textLength="13" lengthAdjust="spacing">-50</text>
<text x="688" y="410" font-size="9" fill="#ffffff" textLength="13" lengthAdjust="spacing">-80</text>
<text x="688" y="416" font-size="9" fill="#ffffff" textLength="18" lengthAdjust="spacing">-100</text>
<text x="689" y="432" font-size="9" fill="#ffffff" textLength="28" lengthAdjust="spacing">0.1457</text>
<text x="689" y="527" font-size="9" fill="#ffffff" textLength="18" lengthAdjust="spacing">0.00</text>
<text x="689" y="550" font-size="9" fill="#ffffff" textLength="31" lengthAdjust="spacing">-0.0434</text>
<text x="28.5" y="47" font-size="9" fill="#ffffff" textLength="50.5" lengthAdjust="spacingAndGlyphs">USDJPY,H1</text>
<text x="85.0" y="47" font-size="9" fill="#ffffff" textLength="33" lengthAdjust="spacingAndGlyphs">145.435</text>
<text x="120.8" y="47" font-size="9" fill="#ffffff" textLength="33" lengthAdjust="spacingAndGlyphs">145.476</text>
<text x="156.6" y="47" font-size="9" fill="#ffffff" textLength="33" lengthAdjust="spacingAndGlyphs">145.409</text>
<text x="192.39999999999998" y="47" font-size="9" fill="#ffffff" textLength="33" lengthAdjust="spacingAndGlyphs">145.450</text>
<text x="17" y="304" font-size="9" fill="#ffffff" textLength="106" lengthAdjust="spacing">R(9,26,52) 45.0 91.0 88.0</text>
<text x="17" y="434" font-size="9" fill="#ffffff"><tspan textLength="29" lengthAdjust="spacing">MACD</tspan><tspan x="46" textLength="98.5" lengthAdjust="spacing">(12,26,9) 0.1318 0.1364</tspan></text>
<text x="30" y="24" font-size="13" fill="#0c0c1c" stroke="none" textLength="56.5" lengthAdjust="spacingAndGlyphs">USDJPY,H1</text></g></svg></body></html>
